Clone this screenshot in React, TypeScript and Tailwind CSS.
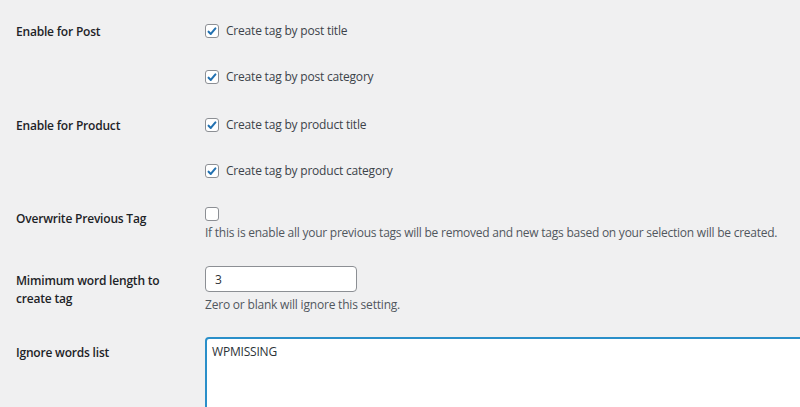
import { useState } from "react"

const CheckIcon = () => (
    <svg viewBox="0 0 14 14" className="w-[13px] h-[13px]">
        <path d="M3 7.2l2.6 2.6L11 3.4" fill="none" stroke="#2271b1" strokeWidth="2.4" strokeLinecap="round" strokeLinejoin="round" />
    </svg>
)

const Checkbox = ({ checked, onToggle }: { checked: boolean; onToggle: () => void }) => {
    return (
        <button
            type="button"
            onClick={onToggle}
            className="flex items-center justify-center w-[14px] h-[14px] shrink-0 bg-white border border-[#8c8f94] rounded-[3px]"
        >
            {checked && <CheckIcon />}
        </button>
    )
}

const CheckLine = ({ label, checked, onToggle }: { label: string; checked: boolean; onToggle: () => void }) => {
    return (
        <label className="flex items-center h-[20px] gap-[7px] text-[12px] tracking-[-0.2px] text-[#3c434a] cursor-pointer">
            <Checkbox checked={checked} onToggle={onToggle} />
            <span>{label}</span>
        </label>
    )
}

const App = () => {
    const [opts, setOpts] = useState({
        postTitle: true,
        postCategory: true,
        productTitle: true,
        productCategory: true,
        overwrite: false,
    })
    const [minLength, setMinLength] = useState("3")
    const [ignoreWords, setIgnoreWords] = useState("WPMISSING")

    const toggle = (key: keyof typeof opts) => setOpts({ ...opts, [key]: !opts[key] })

    return (
        <div className="h-[407px] w-[800px] overflow-hidden bg-[#f0f0f1] pl-4 font-['Open_Sans',sans-serif]">
            <div className="flex flex-col pt-[21px]">
                {/* Enable for Post */}
                <div className="flex">
                    <div className="w-[189px] shrink-0 pt-[1px] text-[12px] leading-[20px] tracking-[-0.2px] font-semibold text-[#1d2327]">Enable for Post</div>
                    <div className="flex flex-col gap-[26px]">
                        <CheckLine label="Create tag by post title" checked={opts.postTitle} onToggle={() => toggle('postTitle')} />
                        <CheckLine label="Create tag by post category" checked={opts.postCategory} onToggle={() => toggle('postCategory')} />
                    </div>
                </div>

                {/* Enable for Product */}
                <div className="flex mt-[28px]">
                    <div className="w-[189px] shrink-0 pt-[1px] text-[12px] leading-[20px] tracking-[-0.2px] font-semibold text-[#1d2327]">Enable for Product</div>
                    <div className="flex flex-col gap-[26px]">
                        <CheckLine label="Create tag by product title" checked={opts.productTitle} onToggle={() => toggle('productTitle')} />
                        <CheckLine label="Create tag by product category" checked={opts.productCategory} onToggle={() => toggle('productCategory')} />
                    </div>
                </div>

                {/* Overwrite */}
                <div className="flex mt-[26px]">
                    <div className="w-[189px] shrink-0 pt-[2px] text-[12px] leading-[20px] tracking-[-0.2px] font-semibold text-[#1d2327]">Overwrite Previous Tag</div>
                    <div className="flex flex-col flex-1">
                        <Checkbox checked={opts.overwrite} onToggle={() => toggle('overwrite')} />
                        <p className="mt-[3px] whitespace-nowrap text-[12px] leading-[18px] tracking-[-0.24px] text-[#50575e]">
                            If this is enable all your previous tags will be removed and new tags based on your selection will be created.
                        </p>
                    </div>
                </div>

                {/* Minimum word length */}
                <div className="flex mt-[24px]">
                    <div className="w-[189px] shrink-0 pt-[6px] pr-4 text-[12px] leading-[18px] tracking-[-0.2px] font-semibold text-[#1d2327]">Mimimum word length to create tag</div>
                    <div className="flex flex-col">
                        <input
                            value={minLength}
                            onChange={(e) => setMinLength(e.target.value)}
                            className="w-[152px] h-[26px] px-[9px] bg-white border border-[#8c8f94] rounded-[4px] text-[12px] text-[#2c3338] outline-none"
                        />
                        <p className="mt-1 text-[12px] leading-[18px] tracking-[-0.2px] text-[#50575e]">Zero or blank will ignore this setting.</p>
                    </div>
                </div>

                {/* Ignore words list */}
                <div className="flex mt-[23px]">
                    <div className="w-[189px] shrink-0 pt-[6px] text-[12px] leading-[20px] tracking-[-0.2px] font-semibold text-[#1d2327]">Ignore words list</div>
                    <textarea
                        value={ignoreWords}
                        onChange={(e) => setIgnoreWords(e.target.value)}
                        className="w-[640px] h-[110px] shrink-0 px-[5px] py-[4px] bg-white border-2 border-[#2a8fc9] rounded-[4px] text-[12px] leading-[18px] tracking-[-0.2px] text-[#2c3338] outline-none resize-none"
                    />
                </div>
            </div>
        </div>
    )
}

export default App
